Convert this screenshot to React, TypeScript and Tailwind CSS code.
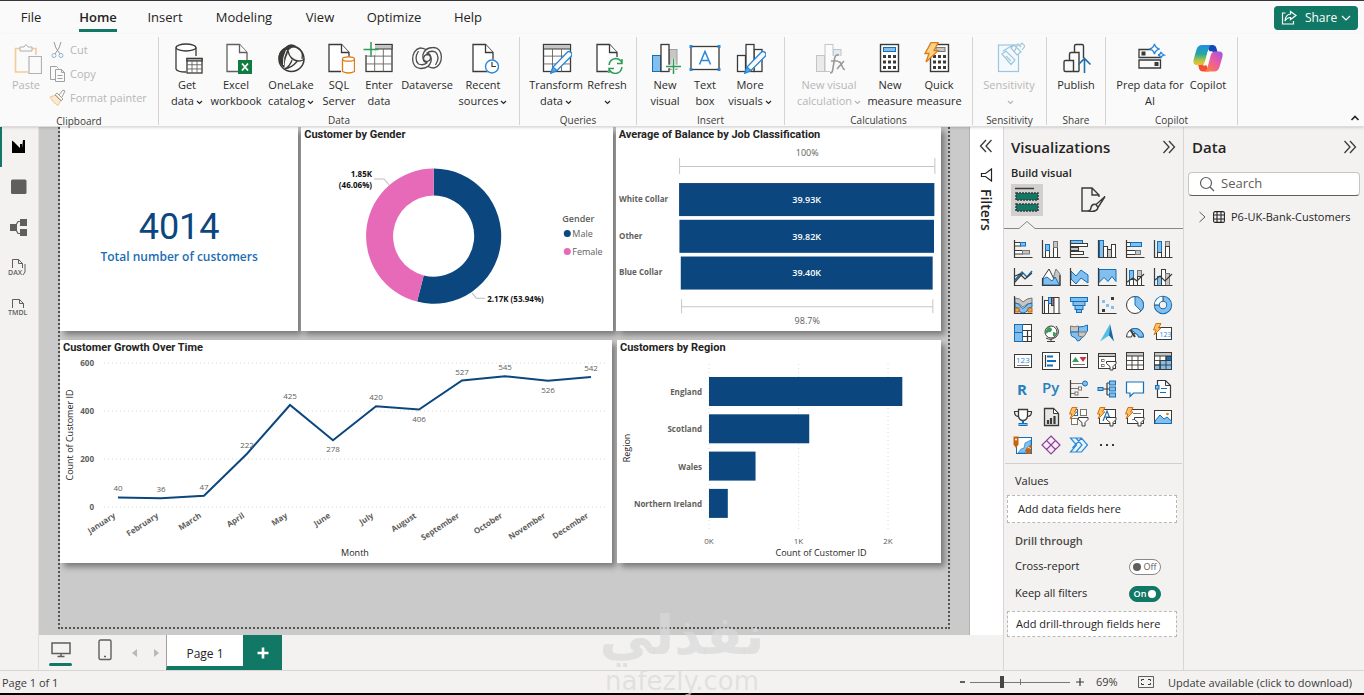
import { useState } from "react";
import type { ReactNode } from "react";

const INK = "#3a3a38";
const BLUE = "#83beec";
const EDGE = "#1170bc";
const GREY = "#c8c6c4";
const MID = "#797673";
const NAVY = "#0b477e";
const PINK = "#e66ab8";

type BoxProps = { x: number; y: number; w: number; h: number; f?: string; s?: string; sw?: number };
function Box({ x, y, w, h, f = "#fff", s = INK, sw = 1 }: BoxProps) {
  return <rect x={x} y={y} width={w} height={h} fill={f} stroke={s} strokeWidth={sw} />;
}
function Line({ d, s = INK, f = "none", w = 1.2 }: { d: string; s?: string; f?: string; w?: number }) {
  return <path d={d} stroke={s} fill={f} strokeWidth={w} />;
}

/* ---------- Ribbon icons (32 x 32) ---------- */

const Pencil = () => (
  <g>
    <path d="M9 31l2-6L25 10.500q2-2 4 0t0 4L15 28.500z" fill="#fafafa" stroke="#2b88d8" strokeWidth="1.4" />
    <path d="M9 31l2-6 4 3.500z" fill="#5ea9e6" stroke="#2b88d8" strokeWidth="1.200" />
  </g>
);
const Bolt = () => <path d="M9 .7h7l-4 8h4L4 20l3-8.500H3z" fill="#fcd28b" stroke="#e07b14" strokeWidth="1.300" />;
const TableGrid = ({ x, y, w, h }: { x: number; y: number; w: number; h: number }) => (
  <g stroke={INK} fill="#fff">
    <rect x={x} y={y} width={w} height={h} strokeWidth="1.300" />
    <rect x={x} y={y} width={w} height={h / 6} fill={GREY} />
    <path
      d={`M${x} ${y + h * 0.43}h${w}M${x} ${y + h * 0.72}h${w}M${x + w / 3} ${y + h / 6}V${y + h}M${x + (w * 2) / 3} ${y + h / 6}V${y + h}`}
      strokeWidth=".9"
      stroke="#69625e"
      fill="none"
    />
  </g>
);
const PageShape = () => (
  <g fill="#fff" stroke={INK} strokeWidth="1.300">
    <path d="M6 2.500h12.500l7.500 8v19H6z" />
    <path d="M18.500 2.500v8H26" />
  </g>
);

const ribbonIcons: Record<string, ReactNode> = {
  paste: (
    <g fill="none" opacity=".55" transform="translate(2 0)">
      <path d="M8 6.500H3.500V30H16M20 6.500h4V13" stroke="#f0a64a" strokeWidth="1.600" />
      <path d="M8 9V5h4q2-4.500 4 0h4v4z" fill="#fafafa" stroke="#777" />
      <path d="M17 14.500h12.500v17H17z" fill="#fafafa" stroke="#777" strokeWidth="1.200" />
    </g>
  ),
  getData: (
    <g fill="none" stroke={INK} strokeWidth="1.300">
      <path d="M5 6v20q0 3.500 10 4V6" fill="#fff" stroke="none" />
      <ellipse cx="15" cy="5.500" rx="10" ry="3.500" fill="#fff" />
      <path d="M5 5.500V27q1 3 10 3M25 5.500V14" />
      <TableGrid x={16} y={16.5} w={15} h={14.500} />
    </g>
  ),
  excel: (
    <g>
      <g opacity=".8" transform="translate(1 0)"><PageShape /></g>
      <rect x="18" y="18" width="14" height="14" fill="#107c41" />
      <path d="M22 21.500l6 7M28 21.500l-6 7" stroke="#fff" strokeWidth="1.800" />
    </g>
  ),
  onelake: (
    <g>
      <circle cx="16.500" cy="17" r="12.500" fill="#fafafa" stroke={INK} strokeWidth="1.500" />
      <path d="M10 5.500Q16-1 23 5.500l-3-.5q-7 1-7.500 7-3 6-3 14Q3 22 3.500 14 4.500 8 10 5.500z" fill={INK} />
      <path d="M13 9q2 9 10 10 5 0 6-2M22 19.500q-6 7-12 7M22 5q7 4 5 12M10 27q5-3 7-9" fill="none" stroke={INK} strokeWidth="1.300" />
      <path d="M11.500 8q-4 8-3 15" fill="none" stroke="#fafafa" strokeWidth="1" />
    </g>
  ),
  sql: (
    <g>
      <PageShape />
      <path d="M18 15.500h14v16.500H18z" fill="#fafafa" />
      <path d="M19.500 17.500v12q6 3 12 0v-12" fill="#fff" stroke="#e07b14" strokeWidth="1.300" />
      <ellipse cx="25.500" cy="17" rx="6" ry="2.200" fill="#fff" stroke="#e07b14" strokeWidth="1.300" />
    </g>
  ),
  enter: (
    <g>
      <TableGrid x={3} y={2.500} w={26} h={27} />
      <path d="M1 0h11v13H1z" fill="#fafafa" />
      <path d="M8 0v15M.5 7.500h15" stroke="#2e9b57" strokeWidth="1.500" />
    </g>
  ),
  dataverse: (
    <g fill="none" stroke="#4d4d4d" strokeWidth="1.300">
      <path d="M9 6C-1 8-1 27 10 26.500q8 0 10-7 1-6-3-7-4 0-4.500 4 0 4 3.500 4" />
      <path d="M23 26C33 24 33 5 22 5.500q-8 0-10 7-1 6 3 7 4.500 0 4.500-4 0-4-3.500-4" />
      <path d="M9 6q3 0 6 1.500M23 26q-3 0-6-1.500M7.500 9q-5 8 0 13 5 2 9-1.500M24.500 23q5-8 0-13-5-2-9 1.500" />
    </g>
  ),
  recent: (
    <g>
      <PageShape />
      <circle cx="25" cy="24.500" r="7.200" fill="#fafafa" />
      <circle cx="25" cy="24.500" r="6.500" fill="#fff" stroke="#2b88d8" strokeWidth="1.400" />
      <path d="M25 20v4.500h4" fill="none" stroke={INK} strokeWidth="1.200" />
    </g>
  ),
  transform: (
    <g transform="translate(1 0)">
      <TableGrid x={2.500} y={2.500} w={27} h={27} />
      <g transform="translate(1 0)"><Pencil /></g>
    </g>
  ),
  refresh: (
    <g>
      <PageShape />
      <path d="M16 15h16v17H17z" fill="#fafafa" />
      <g fill="none" stroke="#2e9b57" strokeWidth="1.500">
        <path d="M18 23q1-6 6.500-6.500 4 0 6.500 4M31 17v4.500h-5M31 25q-1 6-6.500 6.500-4 0-6.500-4M18 31v-4.500h5" />
      </g>
    </g>
  ),
  newVisual: (
    <g>
      <Box x={3.500} y={13.500} w={8} h={16} f={BLUE} s={EDGE} />
      <Box x={20.500} y={7.500} w={7.500} h={20} f={GREY} s="#a19f9d" />
      <Box x={12} y={2.500} w={8} h={27} sw={1.300} />
      <path d="M16 24.500h16M24.500 17v15" stroke="#fafafa" strokeWidth="3.500" />
      <path d="M17 24.500h15M24.500 17v15" stroke="#2e9b57" strokeWidth="1.500" />
    </g>
  ),
  textBox: (
    <g>
      <Box x={2} y={4.500} w={28} h={23} sw={1.300} />
      <path d="M.5 3h3v3h-3zM28.500 3h3v3h-3zM.5 26h3v3h-3zM28.500 26h3v3h-3z" fill="#2b88d8" />
      <path d="M10.500 22.500L16 9.500l5.500 13M12.500 18.500h7" fill="none" stroke="#2b88d8" strokeWidth="1.500" />
    </g>
  ),
  moreVisuals: (
    <g>
      <Box x={3.500} y={13.500} w={8} h={16} sw={1.300} />
      <Box x={20} y={7.500} w={8} h={22} sw={1.300} />
      <Box x={12} y={2.500} w={8} h={27} sw={1.300} />
      <g transform="translate(2 0)"><Pencil /></g>
    </g>
  ),
  calc: (
    <g>
      <g opacity=".55">
        <Box x={3.500} y={13.500} w={8} h={16} f="#ddd" s="#999" />
        <Box x={20} y={7.500} w={8} h={12} f="#c8dff0" s="#999" />
        <Box x={12} y={2.500} w={8} h={27} s="#999" />
      </g>
      <path d="M17 14h14v17H17z" fill="#fafafa" />
      <path d="M26 13q-4-1-4.500 4l-2 12q-.5 2-2.500 2M18 19h7M25 20q2-1 3 2l2 4q1 2 2 1M31 19l-7 8" fill="none" stroke="#9a9a9a" strokeWidth="1.600" />
    </g>
  ),
  measure: (
    <g>
      <Box x={6.500} y={2.500} w={18} h={27} sw={1.400} />
      <Box x={9.500} y={5.500} w={12} h={4} f={BLUE} s={EDGE} />
      <path d="M9 13h3v3H9zM14 13h3v3h-3zM19 13h3v3h-3zM9 18.500h3v3H9zM14 18.500h3v3h-3zM19 18.500h3v3h-3zM9 24h3v3H9zM14 24h3v3h-3zM19 24h3v3h-3z" fill={INK} />
    </g>
  ),
  quick: (
    <g transform="translate(-1 0)">
      <Box x={8.500} y={2.500} w={18} h={27} sw={1.400} />
      <Box x={14} y={5.500} w={9} h={4} f={GREY} s={MID} />
      <path d="M11 13h3v3h-3zM16 13h3v3h-3zM21 13h3v3h-3zM11 18.500h3v3h-3zM16 18.500h3v3h-3zM21 18.500h3v3h-3zM11 24h3v3h-3zM16 24h3v3h-3zM21 24h3v3h-3z" fill={INK} />
      <Bolt />
    </g>
  ),
  sensitivity: (
    <g fill="none" stroke="#9cc7df" strokeWidth="1.200">
      <rect x="5.500" y="3" width="20" height="26.500" fill="#f3f9fc" />
      <path d="M9 12l4-3 9 9-4 4.500zM13 14l5 5M18 6l3-3 7 7-4 3zM21 10l4-8 3 3M26 4l3-3 3 3-3 4M10 9l10-6" fill="#fafafa" />
    </g>
  ),
  publish: (
    <g fill="none" stroke={INK} strokeWidth="1.400">
      <path d="M19 29.500H5.500q-1.500 0-1.500-1.500v-8q0-1.500 1.500-1.500h8V29.500M9.500 18v-6q0-1.500 1.500-1.500h8V29.500M14.500 10V4q0-1.500 1.500-1.500h6q1.500 0 1.500 1.500v12" />
      <path d="M24.500 31V17M18.500 22.500l6-6 6 6" stroke="#1d70ad" strokeWidth="1.600" />
    </g>
  ),
  prep: (
    <g>
      <path d="M17 7.500H5V15.500h21.500v-2M5 18h21.500v8H5z" fill="none" stroke={INK} strokeWidth="1.300" />
      <path d="M7.500 9.500h4v4h-4zM20.500 20h4v4h-4z" fill={INK} />
      <path d="M20.500 2q1 4 5 5-4 1-5 5-1-4-5-5 4-1 5-5zM27 10q.5 2 3 3-2.500.5-3 3-.5-2.500-3-3 2.500-.5 3-3z" fill="#fff" stroke="#2b88d8" strokeWidth="1.300" />
    </g>
  ),
  copilot: (
    <g>
      <defs>
        <linearGradient id="cpA" x1="0" y1="0" x2="0" y2="1">
          <stop offset="0" stopColor="#1f8fe8" />
          <stop offset=".45" stopColor="#26a6a0" />
          <stop offset=".8" stopColor="#b9c83a" />
          <stop offset="1" stopColor="#ffb43a" />
        </linearGradient>
        <linearGradient id="cpB" x1="1" y1="0" x2=".2" y2="1">
          <stop offset="0" stopColor="#9a55e6" />
          <stop offset=".5" stopColor="#ea5aa5" />
          <stop offset="1" stopColor="#ff7b45" />
        </linearGradient>
      </defs>
      <path d="M14 3h6.500q3 0 3.900 3l1.100 4H18z" fill="#1746b8" />
      <path d="M17 29.500h-6q-3.200-.2-4-3L6 22h8z" fill="#f0502f" />
      <path d="M10 3h9.500q-2.200.6-3 4l-3.300 12.500q-.9 3.500-4.400 3.500H5q-4.500 0-3.500-5L4.500 7.500Q5.800 3 10 3z" fill="url(#cpA)" />
      <path d="M22 29.500h-9.500q2.200-.6 3-4l3.300-12.500q.9-3.500 4.400-3.500H27q4.500 0 3.500 5L27.500 25q-1.300 4.500-5.500 4.500z" fill="url(#cpB)" />
      <path d="M15.500 9.700q2.500-.6 5.500-.2-2.200 1-3 4L15.500 23q-2.200.8-5 .2 1.800-1.200 2.700-4.200z" fill="#fafafa" />
    </g>
  ),
};

function Chevron() {
  return (
    <svg width="7" height="5" viewBox="0 0 7 5" className="ml-0.5 inline-block">
      <path d="M1 1l2.500 2.500L6 1" fill="none" stroke="currentColor" strokeWidth="1.200" />
    </svg>
  );
}

type Item = { icon: string; a: string; b?: string; chev?: boolean; w: string; off?: boolean };
function RibbonItem({ icon, a, b, chev, w, off }: Item) {
  return (
    <button disabled={off} className={`${w} flex shrink-0 flex-col items-center whitespace-nowrap pt-2 ${off ? "text-[#b8b6b4]" : "text-[#2b2a29]"}`}>
      <svg width="32" height="32" viewBox="0 0 32 32">{ribbonIcons[icon]}</svg>
      <span className="mt-[3px] block h-8 text-[11px] leading-4">
        <span className="block">{a}</span>
        <span className="block">{b}{chev && <Chevron />}</span>
      </span>
    </button>
  );
}

const groups: { name: string; w: string; pad: string; items: Item[] }[] = [
  {
    name: "Data", w: "w-[361px]", pad: "pl-[6px]",
    items: [
      { icon: "getData", a: "Get", b: "data", chev: true, w: "w-[44px]" },
      { icon: "excel", a: "Excel", b: "workbook", w: "w-[54px]" },
      { icon: "onelake", a: "OneLake", b: "catalog", chev: true, w: "w-[56px]" },
      { icon: "sql", a: "SQL", b: "Server", w: "w-[40px]" },
      { icon: "enter", a: "Enter", b: "data", w: "w-[40px]" },
      { icon: "dataverse", a: "Dataverse", w: "w-[56px]" },
      { icon: "recent", a: "Recent", b: "sources", chev: true, w: "w-[56px]" },
    ],
  },
  {
    name: "Queries", w: "w-[117px]", pad: "pl-[9px]",
    items: [
      { icon: "transform", a: "Transform", b: "data", chev: true, w: "w-[54px]" },
      { icon: "refresh", a: "Refresh", chev: true, w: "w-[48px]" },
    ],
  },
  {
    name: "Insert", w: "w-[148px]", pad: "pl-[8px]",
    items: [
      { icon: "newVisual", a: "New", b: "visual", w: "w-[40px]" },
      { icon: "textBox", a: "Text", b: "box", w: "w-[40px]" },
      { icon: "moreVisuals", a: "More", b: "visuals", chev: true, w: "w-[50px]" },
    ],
  },
  {
    name: "Calculations", w: "w-[188px]", pad: "pl-[6px]",
    items: [
      { icon: "calc", a: "New visual", b: "calculation", chev: true, w: "w-[76px]", off: true },
      { icon: "measure", a: "New", b: "measure", w: "w-[46px]" },
      { icon: "quick", a: "Quick", b: "measure", w: "w-[52px]" },
    ],
  },
  { name: "Sensitivity", w: "w-[74px]", pad: "pl-[8px]", items: [{ icon: "sensitivity", a: "Sensitivity", chev: true, w: "w-[56px]", off: true }] },
  { name: "Share", w: "w-[59px]", pad: "pl-[8px]", items: [{ icon: "publish", a: "Publish", w: "w-[42px]" }] },
  {
    name: "Copilot", w: "w-[132px]", pad: "pl-[8px]",
    items: [
      { icon: "prep", a: "Prep data for", b: "AI", w: "w-[72px]" },
      { icon: "copilot", a: "Copilot", w: "w-[44px]" },
    ],
  },
];

const menu = [
  ["File", "w-[62px]"], ["Home", "w-[72px]"], ["Insert", "w-[62px]"], ["Modeling", "w-[96px]"],
  ["View", "w-[56px]"], ["Optimize", "w-[92px]"], ["Help", "w-[56px]"],
];

function MenuBar() {
  return (
    <header className="flex h-[33px] shrink-0 items-center bg-[#fafafa] pr-1.5">
      <nav className="flex h-full flex-1">
        {menu.map(([name, w]) => (
          <button key={name} className={`${w} flex flex-col items-center pt-1.5 text-[13px] leading-5 text-[#252423] ${name === "Home" ? "font-semibold" : ""}`}>
            <span className={name === "Home" ? "border-b-[3px] border-[#117865] pb-0.5" : ""}>{name}</span>
          </button>
        ))}
      </nav>
      <button className="flex h-6 w-[84px] items-center justify-center gap-2 rounded bg-[#117865] text-xs text-white">
        <svg width="16" height="16" viewBox="0 0 16 16" fill="none" stroke="#fff" strokeWidth="1.200">
          <path d="M4.500 3H1.500v11h11v-3M9.500 1.500l5.500 4-5.500 4V7.500Q6 7.500 4 11q.5-6.500 5.500-7z" />
        </svg>
        <span className="flex items-center gap-1">
          Share
          <svg width="10" height="6" viewBox="0 0 10 6"><path d="M1 1l4 4 4-4" fill="none" stroke="#fff" strokeWidth="1.200" /></svg>
        </span>
      </button>
    </header>
  );
}

function Ribbon() {
  return (
    <section className="relative z-10 flex h-[93px] shrink-0 border-b border-[#dedddc] bg-[#fafafa] pt-[3px] shadow-sm">
      <div className="flex h-[88px] w-[159px] shrink-0 flex-col border-r border-[#d6d4d2] text-[#b8b6b4]">
        <div className="-mt-[3px] flex h-[79px]">
          <button disabled className="flex w-[48px] flex-col items-center pl-1 pt-2 text-[11px] leading-4">
            <svg width="32" height="32" viewBox="0 0 32 32">{ribbonIcons.paste}</svg>
            <span className="mt-[3px]">Paste</span>
          </button>
          <div className="flex flex-col items-start pt-1 text-[11px]">
            <button disabled className="flex h-6 items-center gap-1">
              <svg width="18" height="18" viewBox="0 0 18 18" fill="none" stroke="#999">
                <path d="M6 1q1 6 6 12M13 1q-1 6-6 12" />
                <circle cx="6" cy="14.500" r="2" stroke="#8fb4d0" /><circle cx="13" cy="14.500" r="2" stroke="#8fb4d0" />
              </svg>
              Cut
            </button>
            <button disabled className="flex h-6 items-center gap-1">
              <svg width="18" height="18" viewBox="0 0 18 18" fill="none" stroke="#a0a0a0">
                <path d="M7 14.500H2.500v-13h6l2 2M7.500 4.500h6l3 3v9h-9zM13.500 4.500v3h3M9.500 10.500h5M9.500 13.500h5" />
              </svg>
              Copy
            </button>
            <button disabled className="flex h-6 items-center gap-1 whitespace-nowrap">
              <svg width="18" height="18" viewBox="0 0 18 18" fill="none">
                <path d="M2 8l6-2 5 5-3 5.500Q5 14 2 8z" stroke="#f2c68f" fill="#fbe9d2" />
                <path d="M7 6l2-2 6 6-2 2zM11 6l4-5 2 1-3 6" stroke="#a0a0a0" />
              </svg>
              Format painter
            </button>
          </div>
        </div>
        <span className="mt-1 text-center text-[10px] leading-[14px] text-[#3b3a39]">Clipboard</span>
      </div>
      {groups.map((g) => (
        <div key={g.name} className={`${g.w} flex h-[88px] shrink-0 flex-col border-r border-[#d6d4d2]`}>
          <div className={`${g.pad} -mt-[3px] flex h-[79px]`}>
            {g.items.map((it) => <RibbonItem key={it.icon} {...it} />)}
          </div>
          <span className="mt-1 text-center text-[10px] leading-[14px] text-[#3b3a39]">{g.name}</span>
        </div>
      ))}
      <button aria-label="Collapse ribbon" className="mb-1 ml-auto mr-1 self-end">
        <svg width="10" height="8" viewBox="0 0 10 8"><path d="M1.500 6L5 2.500 8.500 6" fill="none" stroke="#252423" strokeWidth="1.600" /></svg>
      </button>
    </section>
  );
}

/* ---------- Left rail ---------- */

const rail: { label: string; art: ReactNode }[] = [
  { label: "Report view", art: <path d="M4 3.500l2 1.500 6 6V7h2v4l1-8h2v13H4z" fill="#000" /> },
  { label: "Table view", art: <rect x="3" y="2.500" width="15.500" height="14.500" rx="1.500" fill="#605e5c" /> },
  {
    label: "Model view",
    art: (
      <g fill="#605e5c"><path d="M2 7h7v7H2zM12 2h7v7h-7zM12 12h7v7h-7z" /><path d="M8 8l2-3.500h3M8 13l2 3.500h3" fill="none" stroke="#605e5c" strokeWidth="1.200" /></g>
    ),
  },
  {
    label: "DAX query view",
    art: (
      <g fill="none" stroke="#605e5c"><path d="M4.500 11V2.500h6l4 4V11M10.500 2.500v4h4M17 7v8l-2 3" /><text x="0" y="18" fontSize="7" fontWeight="600" fill="#605e5c" stroke="none">DAX</text></g>
    ),
  },
  {
    label: "TMDL view",
    art: (
      <g fill="none" stroke="#605e5c"><path d="M4.500 11V2.500h7l4 4V11M11.500 2.500v4h4" /><text x="0" y="18" fontSize="7" fontWeight="600" fill="#605e5c" stroke="none">TMDL</text></g>
    ),
  },
];

function Rail() {
  return (
    <aside className="flex w-[39px] shrink-0 flex-col border-r border-[#e1dfdd] bg-[#f3f2f1]">
      {rail.map((r, i) => (
        <button key={r.label} aria-label={r.label} className={`flex h-10 items-center justify-center border-l-2 pr-1 ${i === 0 ? "border-[#117865]" : "border-transparent"}`}>
          <svg width="20" height="20" viewBox="0 0 20 20" className="overflow-visible">{r.art}</svg>
        </button>
      ))}
    </aside>
  );
}

/* ---------- Report cards ---------- */

function Card({ title, grow, children }: { title?: string; grow: string; children: ReactNode }) {
  return (
    <article className={`${grow} flex min-w-0 flex-col bg-white shadow-[4px_4px_6px_rgba(0,0,0,0.4)]`}>
      {title && <h2 className="h-4 whitespace-nowrap pl-[3px] font-[Roboto,sans-serif] text-[11px] font-bold leading-4 text-[#252423]">{title}</h2>}
      {children}
    </article>
  );
}

function Donut() {
  const cx = 132.5, cy = 93, R = 67.5, r = 40.5;
  const a = 0.5394 * Math.PI * 2;
  const p = (rad: number, ang: number) => `${cx + rad * Math.sin(ang)} ${cy - rad * Math.cos(ang)}`;
  return (
    <svg viewBox="0 0 311 188" className="w-full" fontSize="8">
      <path d={`M${p(R, 0)}A${R} ${R} 0 1 1 ${p(R, a)}L${p(r, a)}A${r} ${r} 0 1 0 ${p(r, 0)}z`} fill={NAVY} />
      <path d={`M${p(R, a)}A${R} ${R} 0 0 1 ${p(R, 0)}L${p(r, 0)}A${r} ${r} 0 0 0 ${p(r, a)}z`} fill={PINK} />
      <path d="M73 36h10l5 6M171 150l4 5h9" fill="none" stroke="#c0bebc" />
      <g fontWeight="700" fill="#111">
        <text x="71" y="34" textAnchor="end">1.85K</text>
        <text x="71" y="45" textAnchor="end">(46.06%)</text>
        <text x="186" y="159">2.17K (53.94%)</text>
      </g>
      <g fill="#605e5c" fontSize="9">
        <text x="261" y="79" fontWeight="600">Gender</text>
        <text x="271" y="94">Male</text>
        <text x="271" y="112">Female</text>
      </g>
      <circle cx="266" cy="90.500" r="3.500" fill={NAVY} />
      <circle cx="266" cy="108.500" r="3.500" fill={PINK} />
    </svg>
  );
}

function BalanceChart() {
  const rows = [
    { name: "White Collar", v: 39.93 },
    { name: "Other", v: 39.82 },
    { name: "Blue Collar", v: 39.4 },
  ];
  return (
    <svg viewBox="0 0 325 188" className="w-full" fontSize="8">
      <path d="M63.500 15v16M318.500 15v16M63.500 23.500h255M65.500 156v14M316.500 156v14M65.500 163.500h251" stroke="#c8c6c4" fill="none" />
      <g fill="#605e5c" textAnchor="middle" fontSize="9"><text x="191" y="13">100%</text><text x="191" y="181">98.7%</text></g>
      {rows.map((r, i) => {
        const w = (r.v / 39.93) * 255;
        return (
          <g key={r.name}>
            <rect x={190.5 - w / 2} y={40 + i * 36.7} width={w} height="33" fill={NAVY} />
            <text x="190.500" y={60 + i * 36.5} fill="#fff" fontWeight="600" fontSize="9" textAnchor="middle">{r.v.toFixed(2)}K</text>
            <text x="3" y={59 + i * 36.5} fill="#605e5c" fontWeight="700">{r.name}</text>
          </g>
        );
      })}
    </svg>
  );
}

function GrowthChart() {
  const months = ["January", "February", "March", "April", "May", "June", "July", "August", "September", "October", "November", "December"];
  const vals = [40, 36, 47, 222, 425, 278, 420, 406, 527, 545, 526, 542];
  const below = [5, 7, 10];
  const X = (i: number) => 58 + i * 43;
  const Y = (v: number) => 151 - v * 0.24;
  return (
    <svg viewBox="0 0 552 207" className="w-full" fontSize="8">
      {[0, 200, 400, 600].map((t) => (
        <g key={t}>
          <path d={`M44 ${Y(t)}H546`} stroke="#dcdad8" strokeDasharray="1 3" />
          <text x="34" y={Y(t) + 3} textAnchor="end" fill="#605e5c" fontWeight="700">{t}</text>
        </g>
      ))}
      <polyline points={vals.map((v, i) => `${X(i)},${Y(v)}`).join(" ")} fill="none" stroke={NAVY} strokeWidth="2" />
      {vals.map((v, i) => (
        <text key={months[i]} x={X(i)} y={Y(v) + (below.includes(i) ? 12 : -6)} textAnchor="middle" fill="#605e5c">{v}</text>
      ))}
      {months.map((m, i) => (
        <text key={m} textAnchor="end" fill="#605e5c" fontWeight="700" transform={`translate(${X(i) - 2} 161) rotate(-33)`}>{m}</text>
      ))}
      <g fill="#252423" fontSize="9" textAnchor="middle">
        <text transform="translate(13 79) rotate(-90)">Count of Customer ID</text>
        <text x="295" y="200">Month</text>
      </g>
    </svg>
  );
}

function RegionChart() {
  const rows = [
    { name: "England", v: 2.16 },
    { name: "Scotland", v: 1.12 },
    { name: "Wales", v: 0.52 },
    { name: "Northern Ireland", v: 0.21 },
  ];
  return (
    <svg viewBox="0 0 324 207" className="w-full" fontSize="8">
      {[0, 1, 2].map((t) => (
        <g key={t}>
          <path d={`M${92 + t * 89.5} 8V176`} stroke="#dcdad8" strokeDasharray="1 3" />
          <text x={92 + t * 89.5} y="188" textAnchor="middle" fill="#605e5c">{t}K</text>
        </g>
      ))}
      {rows.map((r, i) => (
        <g key={r.name}>
          <rect x="92" y={21 + i * 37.3} width={r.v * 89.5} height="29" fill={NAVY} />
          <text x="85" y={39 + i * 37.3} textAnchor="end" fill="#605e5c" fontWeight="700">{r.name}</text>
        </g>
      ))}
      <g fill="#252423" fontSize="9" textAnchor="middle">
        <text transform="translate(13 92) rotate(-90)">Region</text>
        <text x="204" y="200">Count of Customer ID</text>
      </g>
    </svg>
  );
}

function Canvas() {
  return (
    <div className="flex min-w-0 flex-1 border-r border-[#b3b1af] bg-[#cacaca] pb-1.5 pl-[19px] pr-[19px]">
      <div className="flex min-w-0 flex-1 flex-col border-2 border-t-0 border-dotted border-[#55534f] pr-[7px]">
        <div className="flex gap-[3px]">
          <Card grow="flex-[238]">
            <div className="flex flex-1 flex-col items-center justify-center pt-4">
              <p className="font-[Roboto,sans-serif] text-[36px] font-normal leading-9 text-[#0b477e]">4014</p>
              <p className="mt-1 text-xs font-semibold text-[#1a6db5]">Total number of customers</p>
            </div>
          </Card>
          <Card grow="flex-[311]" title="Customer by Gender"><Donut /></Card>
          <Card grow="flex-[325]" title="Average of Balance by Job Classification"><BalanceChart /></Card>
        </div>
        <div className="mt-[9px] flex gap-[5px]">
          <Card grow="flex-[552]" title="Customer Growth Over Time"><GrowthChart /></Card>
          <Card grow="flex-[324]" title="Customers by Region"><RegionChart /></Card>
        </div>
      </div>
    </div>
  );
}

/* ---------- Side panes ---------- */

function DoubleChevron({ left }: { left?: boolean }) {
  return (
    <svg width="14" height="14" viewBox="0 0 14 14" fill="none" stroke="#3b3a39" strokeWidth="1.300">
      <path d={left ? "M7 1L1.500 7 7 13M12.500 1L7 7l5.500 6" : "M1.500 1L7 7l-5.500 6M7 1l5.500 6L7 13"} />
    </svg>
  );
}

const Axes = () => <Line d="M1.500 1v17.500h18" />;
const SmallFunnel = () => <path d="M9.500 10.500h9.500v2L16 15.500V19h-3v-3.500l-3.500-3z" fill="#fff" stroke={INK} />;
const SmallBolt = () => <path d="M3 .5h5L5.500 5h2.500L1 12l2-5H.5z" fill="#fcc06a" stroke="#d9730d" />;

const visuals: [string, ReactNode][] = [
  ["Stacked bar chart", <><Box x={1.5} y={3.500} w={6} h={3.500} /><Box x={7.5} y={3.500} w={5} h={3.500} f={BLUE} s={EDGE} /><Box x={1.5} y={11.500} w={8} h={3.500} /><Box x={9.500} y={11.500} w={7} h={3.500} f={GREY} s={MID} /><Axes /></>],
  ["Stacked column chart", <><Box x={4.500} y={11.500} w={4} h={7} /><Box x={4.500} y={5.500} w={4} h={6} f={BLUE} s={EDGE} /><Box x={12.500} y={8.500} w={4} h={10} /><Box x={12.500} y={2.500} w={4} h={6} f={GREY} s={MID} /><Axes /></>],
  ["Clustered bar chart", <><Box x={1.500} y={1.500} w={12} h={3} f={BLUE} s={EDGE} /><Box x={1.500} y={4.500} w={17} h={3} /><Box x={1.500} y={8.500} w={8} h={3} f={GREY} /><Box x={1.500} y={12.500} w={13} h={3} /><Axes /></>],
  ["Clustered column chart", <><Box x={2.500} y={1.500} w={4} h={17} f={BLUE} s={EDGE} /><Box x={6.500} y={7.500} w={4} h={11} /><Box x={10.500} y={10.500} w={4} h={8} f={GREY} /><Box x={14.500} y={5.500} w={4} h={13} /><Axes /></>],
  ["100% stacked bar chart", <><Box x={1.500} y={3.500} w={4} h={4} /><Box x={5.500} y={3.500} w={11} h={4} f={BLUE} s={EDGE} /><Box x={1.500} y={11.500} w={9} h={4} /><Box x={10.500} y={11.500} w={5} h={4} f={GREY} s={MID} /><Axes /></>],
  ["100% stacked column chart", <><Box x={4.500} y={2.500} w={4} h={11} f={BLUE} s={EDGE} /><Box x={4.500} y={13.500} w={4} h={5} /><Box x={12.500} y={2.500} w={4} h={5} f={GREY} s={MID} /><Box x={12.500} y={7.500} w={4} h={11} /><Axes /></>],
  ["Line chart", <><Line d="M2 13l7-8 5 5 5-6" s={EDGE} w={1.500} /><Line d="M2 9l5-2 5 5 7-6M2 15l8-9" s={INK} /><Axes /></>],
  ["Area chart", <><path d="M15 2l4 5v11H10z" fill={GREY} stroke={MID} /><path d="M8 2l8 16H2V11z" fill="#fff" stroke={INK} /><path d="M2 12l4-2 5 4 3-4 4.500 8H2z" fill={BLUE} stroke={EDGE} /><Line d="M1.500 11v7.500h17.500V8" /></>],
  ["Stacked area chart", <><path d="M2 4l5 5 5-6 7 5v8l-7-5-5 6-5-5z" fill={BLUE} stroke={EDGE} /><Axes /></>],
  ["100% stacked area chart", <><path d="M2 2.500h17v12l-4-5-4 5-4-4-5 5z" fill={BLUE} stroke={EDGE} /><Axes /></>],
  ["Line and stacked column chart", <><Box x={4.500} y={3.500} w={4} h={9} f={BLUE} s={EDGE} /><Box x={4.500} y={12.500} w={4} h={6} /><Box x={12.500} y={3.500} w={4} h={6} f={GREY} s={MID} /><Box x={12.500} y={9.500} w={4} h={9} /><Line d="M2 15l6-4 4 3 7-7" /><Axes /></>],
  ["Line and clustered column chart", <><Box x={4.500} y={9.500} w={4} h={9} f={BLUE} s={EDGE} /><Box x={8.500} y={2.500} w={4} h={16} /><Box x={12.500} y={6.500} w={4} h={12} f={GREY} s={MID} /><Line d="M2 13l5-4 5 5 7-7" /><Axes /></>],
  ["Ribbon chart", <><path d="M2 3q5 0 8 4 4-4 9-4v5q-5 0-9 4-3-4-8-4z" fill={GREY} stroke={MID} /><path d="M2 8q4 0 6 4 2 3 4 0 3-4 7-4v4q-4 0-5 4-4 4-8 0-1-4-4-4z" fill={BLUE} stroke={EDGE} /><Box x={2} y={13} w={4} h={4} f="#f0a64a" s="#c0640c" /><Box x={15} y={13} w={4} h={4} f="#f0a64a" s="#c0640c" /><Axes /></>],
  ["Waterfall chart", <><Box x={3.500} y={5.500} w={4} h={13} /><Box x={7.500} y={2.500} w={3} h={6} f={BLUE} s={EDGE} /><Box x={10.500} y={2.500} w={2.500} h={8} f="#9c7b9c" /><Box x={13} y={2.500} w={5} h={16} /><Axes /></>],
  ["Funnel", <><Box x={1.500} y={2.500} w={17} h={4} f={BLUE} s={EDGE} /><Box x={4} y={6.500} w={12} h={4} f={BLUE} s={EDGE} /><Box x={6} y={10.500} w={8} h={4} f={BLUE} s={EDGE} /><Box x={7.500} y={14.500} w={5} h={3} f={BLUE} s={EDGE} /></>],
  ["Scatter chart", <><path d="M14 2h3v3h-3zM5 14h3v3H5z" fill={INK} /><path d="M5 5h3v3H5zM9 9h3v3H9zM14 11h3v3h-3z" fill={BLUE} /><Axes /></>],
  ["Pie chart", <><circle cx="10" cy="10" r="8.500" fill="#fff" stroke={INK} /><path d="M10 1.500v8.500l6 6A8.500 8.500 0 0 0 10 1.500z" fill={BLUE} stroke={EDGE} /></>],
  ["Donut chart", <><circle cx="10" cy="10" r="6.200" fill="none" stroke={EDGE} strokeWidth="6" /><circle cx="10" cy="10" r="6.200" fill="none" stroke={BLUE} strokeWidth="4" /><path d="M3.800 10A6.200 6.200 0 0 1 10 3.800" fill="none" stroke="#fff" strokeWidth="4" /><path d="M1.500 10h4.500M10 1.500V6" stroke={INK} /></>],
  ["Treemap", <><Box x={1.500} y={1.500} w={17} h={17} /><Box x={1.500} y={1.500} w={8} h={8} f={BLUE} s={EDGE} /><Box x={1.500} y={9.500} w={8} h={9} f={BLUE} s={EDGE} /><Line d="M9.500 7.500h9M14.500 7.500v11M9.500 13.500h9" /></>],
  ["Map", <><circle cx="10" cy="9" r="6" fill="#fff" stroke={INK} /><path d="M7 4q4 0 4 3-1 3-4 2-1 3-3 0zM12 9q3 0 3 2-1 3-3 2z" fill="#3a9b5c" /><path d="M15 3q5 6 0 11-5 4-10 1M10 16v2.500M6 18.500h8" fill="none" stroke={INK} /></>],
  ["Filled map", <><path d="M1.500 3q4 1.500 8 0v6h-8z" fill={GREY} stroke={MID} /><path d="M9.500 4q5 0 9-2v6l-3 3h-6z" fill={BLUE} stroke={EDGE} /><path d="M1.500 9h8v3h4l2-1q0 3-3 4-1 3-4 3l-2-3-4-2z" fill={BLUE} stroke={EDGE} /><path d="M9.500 9h8q-1 4-4 5l-4-1z" fill={GREY} stroke={MID} /></>],
  ["Azure map", <><path d="M13 1L3 18.500l9-6z" fill="#52bfe8" /><path d="M13 1l4 17.500-5-6z" fill="#1868a8" /></>],
  ["Gauge", <><path d="M1.500 14a8.500 8.500 0 0 1 17 0h-5a3.500 3.500 0 0 0-7 0z" fill="#fff" stroke={INK} /><path d="M6 6.500a8.500 8.500 0 0 1 12.500 7.500h-5q0-2-2-3z" fill={BLUE} stroke={EDGE} /><Line d="M5.500 7l4.500 7" w={2} /></>],
  ["Card (new)", <><Box x={3.500} y={4.500} w={15} h={12} /><text x="6.500" y="14" fontSize="7" fill="#2b88d8">123</text><SmallBolt /></>],
  ["Card", <><Box x={1.500} y={3.500} w={17} h={13} /><text x="3" y="12" fontSize="8" fill="#2b88d8">123</text><Line d="M4 14.500h12" s={MID} w={1} /></>],
  ["Multi-row card", <><Box x={1.500} y={1.500} w={17} h={17} /><Line d="M6 5.500h6M6 10h9M6 14.500h6" s={EDGE} w={2} /><Line d="M4.500 4v12" /></>],
  ["KPI", <><Box x={1.500} y={2.500} w={17} h={14} /><path d="M3 11l3.500-5L10 11z" fill="#3a9b5c" /><path d="M10.500 6h7L14 11z" fill="#d13438" /><Line d="M4 13.500h12" s={MID} w={1} /></>],
  ["Slicer", <><Box x={1.500} y={2.500} w={17} h={15} /><Box x={1.500} y={2.500} w={17} h={3} f={GREY} /><Box x={4.500} y={8.500} w={2.500} h={2} s={MID} /><Box x={4.500} y={13.500} w={2.500} h={2} s={MID} /><SmallFunnel /></>],
  ["Table", <><Box x={1.500} y={1.500} w={17} h={17} /><Box x={1.500} y={1.500} w={17} h={3.500} f={GREY} /><Line d="M1.500 9.500h17M1.500 14h17M7 5v13.500M13 5v13.500" w={0.900} /></>],
  ["Matrix", <><Box x={1.500} y={1.500} w={17} h={17} /><Box x={7} y={9.500} w={11.500} h={9} f={BLUE} /><Box x={1.500} y={14} w={5.500} h={4.500} f={BLUE} /><Box x={13} y={5} w={5.500} h={4.500} f={EDGE} /><Box x={1.500} y={1.500} w={17} h={3.500} f={GREY} /><Line d="M1.500 9.500h17M1.500 14h17M7 5v13.500M13 5v13.500" w={0.900} /></>],
  ["R script visual", <text x="4" y="16" fontSize="15" fontWeight="700" fill="#2680bd">R</text>],
  ["Python visual", <text x="1" y="14" fontSize="15" fontWeight="600" fill="#2680bd">Py</text>],
  ["Key influencers", <><Line d="M2 4.500h12M2 9.500h7M2 14.500h4" s={MID} /><circle cx="16" cy="4.500" r="2.500" fill={BLUE} stroke={EDGE} /><Box x={9.500} y={8} w={3} h={3} s={MID} /><Box x={6} y={13} w={3} h={3} s={MID} /><Axes /></>],
  ["Decomposition tree", <><Line d="M6 10h4M10 4v12M10 4h3M10 10h3M10 16h3" /><Box x={1} y={8.500} w={5} h={3} f={BLUE} s={EDGE} /><Box x={12.500} y={2} w={6} h={4} f={BLUE} s={EDGE} /><Box x={12.500} y={8} w={6} h={4} f={BLUE} s={EDGE} /><Box x={12.500} y={14} w={6} h={4} f={BLUE} s={EDGE} /></>],
  ["Q&A", <path d="M1.500 3h17v11h-10L5 17.500V14H1.500z" fill="#fff" stroke={EDGE} strokeWidth="1.200" />],
  ["Smart narrative", <><path d="M4.500 1.500h8l5 5v12h-13z" fill="#fff" stroke={INK} strokeWidth="1.200" /><path d="M12.500 1.500v5h5" fill="none" stroke={INK} /><Line d="M8 9.500h6M7 13.500h6" s={EDGE} /><Box x={2.500} y={6.500} w={3.5} h={3.5} f={BLUE} s={EDGE} /></>],
  ["Metrics", <><path d="M5.500 2.500h9v7q-1 4-4.500 4t-4.500-4z" fill="#fff" stroke={INK} strokeWidth="1.300" /><Line d="M5.500 4.500h-4q0 5 4 5M14.500 4.500h4q0 5-4 5" /><Line d="M10 13.500v3" s={EDGE} w={2} /><Box x={6} y={16.500} w={8} h={2} f={BLUE} s={EDGE} /></>],
  ["Paginated report", <><path d="M3.500 1.500h9l5 5v12h-14z" fill="#e6e6e6" stroke={INK} strokeWidth="1.300" /><path d="M12.500 1.500v5h5z" fill="#fff" stroke={INK} /><Line d="M7 17v-4M10 17v-6M13.500 17v-8" w={2.200} /></>],
  ["Button slicer", <><Box x={2.500} y={2.500} w={6} h={6} s={EDGE} /><Box x={11.500} y={2.500} w={6} h={6} s={MID} /><Box x={2.500} y={11.500} w={6} h={6} s={MID} /><SmallBolt /><SmallFunnel /></>],
  ["Text slicer", <><Box x={2.500} y={2.500} w={16} h={14} /><Line d="M6 14l4-10 4 10M8 10h4" s={EDGE} /><SmallBolt /><SmallFunnel /></>],
  ["List slicer", <><Box x={2.500} y={2.500} w={16} h={14} /><Line d="M8 6.500h8M7 12.500h4" s={MID} /><SmallBolt /><SmallFunnel /></>],
  ["Image", <><Box x={1.500} y={3.500} w={17} h={13} /><path d="M2 14l5-6 4 4 3-2 4.500 4v2.500H2z" fill={BLUE} stroke={EDGE} /><circle cx="14.500" cy="7" r="1.300" fill="#e07b14" /></>],
  ["ArcGIS", <><Box x={3.500} y={2.500} w={15} h={16} s={EDGE} /><path d="M8 14l3-1 1-5 6-3v5l-4 3-2 5H5z" fill={BLUE} stroke={EDGE} strokeWidth=".6" /><path d="M.5 1.500h5v8L3 13 .5 9.500z" fill="#c8640c" /><circle cx="3" cy="4.500" r="1" fill="#fff" /><circle cx="15.500" cy="16" r="3" fill="#c8640c" /><circle cx="17.500" cy="11.500" r="1.500" fill="#c8640c" /></>],
  ["Power Apps", <g fill="#f9eef9" stroke="#8e3f96" strokeWidth="1.200"><path d="M10 1l4.500 4.500L10 10 5.500 5.500zM5.500 5.500L10 10l-4.500 4.500L1 10zM14.500 5.500L19 10l-4.500 4.500L10 10zM10 10l4.500 4.500L10 19l-4.500-4.500z" /></g>],
  ["Power Automate", <g fill="#eaf4fc" stroke="#2b88d8" strokeWidth="1.200"><path d="M1.500 3h11l6 7-6 7h-11l6-7zM7 3l6 7-6 7M12.500 3l-9 10" /></g>],
  ["More visuals", <path d="M3 9h2v2H3zM9 9h2v2H9zM15 9h2v2h-2z" fill={INK} />],
];

function Toggle({ label, defaultOn }: { label: string; defaultOn: boolean }) {
  const [on, setOn] = useState(defaultOn);
  return (
    <label className="flex h-[27px] items-center justify-between pl-[11px] pr-[22px] text-[11px] text-[#252423]">
      {label}
      <input type="checkbox" className="sr-only" checked={on} onChange={() => setOn(!on)} />
      <span aria-hidden="true" className={`flex h-4 w-8 items-center justify-center gap-0.5 rounded-full border text-[9px] ${on ? "border-[#117865] bg-[#117865] font-semibold text-white" : "border-[#8a8886] bg-white text-[#605e5c]"}`}>
        {on && "On"}
        <span className={`size-2 rounded-full ${on ? "bg-white" : "bg-[#605e5c]"}`} />
        {!on && "Off"}
      </span>
    </label>
  );
}

function FiltersPane() {
  return (
    <aside className="flex w-[33px] shrink-0 flex-col items-center bg-white pr-0.5 pt-3">
      <button aria-label="Expand filters"><DoubleChevron left /></button>
      <svg width="14" height="14" viewBox="0 0 14 14" className="mt-[15px]" fill="none" stroke="#252423" strokeWidth="1.200">
        <path d="M12.500 1v12L6.500 8.500h-4v-3h4z" />
      </svg>
      <span className="mt-[7px] text-sm font-semibold leading-4 text-[#252423] [writing-mode:vertical-rl]">Filters</span>
    </aside>
  );
}

function VisualizationsPane() {
  return (
    <aside className="flex w-[181px] shrink-0 flex-col border-x border-[#d8d6d4] bg-[#f3f2f1] text-[#252423]">
      <div className="flex h-9 items-center justify-between pl-[7px] pr-[7px] pt-1">
        <h2 className="text-[15px] font-semibold">Visualizations</h2>
        <button aria-label="Collapse visualizations"><DoubleChevron /></button>
      </div>
      <h3 className="pl-[7px] text-[11px] font-semibold leading-5">Build visual</h3>
      <div className="flex gap-[34px] pl-[7px] pt-px">
        <button aria-label="Build visual" className="flex size-8 items-center justify-center bg-[#d2d0ce]">
          <svg width="26" height="26" viewBox="0 0 26 26">
            <path d="M1 1.500h19" stroke={INK} strokeWidth="1.500" />
            <rect x="2" y="6" width="22" height="7" fill="#117865" stroke={INK} strokeWidth="1.500" strokeDasharray="2 1" />
            <rect x="2" y="17" width="22" height="7" fill="#117865" stroke={INK} strokeWidth="1.500" strokeDasharray="2 1" />
          </svg>
        </button>
        <button aria-label="Format visual" className="flex size-8 items-center justify-center">
          <svg width="26" height="26" viewBox="0 0 26 26" fill="none" stroke={INK} strokeWidth="1.400">
            <path d="M8 24H2V1h10l7 7v2M12 1v7h7" />
            <path d="M25 9.500l-9 8 2 3 7-11zM16 17.500q-4-1-5 3 0 3-3 3.500 9 1.500 10-3.500z" fill="#f3f2f1" />
          </svg>
        </button>
      </div>
      <svg viewBox="0 0 180 10" preserveAspectRatio="xMinYMin slice" className="mt-[4px] h-[10px] w-full" fill="none" stroke="#8a8886">
        <path d="M0 8.500h15l8-7 8 7h149" />
      </svg>
      <div className="ml-[5px] mt-[5px] grid w-[168px] grid-cols-6">
        {visuals.map(([name, art]) => (
          <button key={name} aria-label={name} className="flex h-7 items-center justify-center">
            <svg width="20" height="20" viewBox="0 0 20 20" className="overflow-visible">{art}</svg>
          </button>
        ))}
      </div>
      <div className="mx-px mt-1 border-t border-[#d2d0ce]" />
      <h3 className="mt-2 pl-[11px] text-[11px] leading-[18px]">Values</h3>
      <div className="ml-[3px] mr-[6px] mt-[5px] flex h-7 items-center border border-dashed border-[#bab8b6] bg-white pl-[10px] text-[11px]">Add data fields here</div>
      <h3 className="mt-[9px] pl-[11px] text-[11px] font-semibold leading-[18px] text-[#4a4846]">Drill through</h3>
      <div className="mt-[3px]">
        <Toggle label="Cross-report" defaultOn={false} />
        <Toggle label="Keep all filters" defaultOn />
      </div>
      <div className="ml-[3px] mr-[6px] mt-1 flex h-[26px] items-center whitespace-nowrap border border-dashed border-[#bab8b6] bg-white pl-2 text-[11px]">Add drill-through fields here</div>
    </aside>
  );
}

function DataPane() {
  return (
    <aside className="flex w-[180px] shrink-0 flex-col bg-[#f3f2f1] pl-1 pr-1 text-[#252423]">
      <div className="flex h-9 items-center justify-between pl-1 pr-[3px] pt-1">
        <h2 className="text-[15px] font-semibold">Data</h2>
        <button aria-label="Collapse data"><DoubleChevron /></button>
      </div>
      <label className="mt-[9px] flex h-6 items-center gap-1.5 rounded border border-[#c8c6c4] border-b-[#605e5c] bg-white pl-2.5">
        <svg width="16" height="16" viewBox="0 0 16 16" fill="none" stroke="#605e5c" strokeWidth="1.200" className="shrink-0">
          <circle cx="7" cy="7" r="5.500" /><path d="M11 11l4 4" />
        </svg>
        <input aria-label="Search" placeholder="Search" className="w-full min-w-0 bg-transparent text-[13px] outline-none placeholder:text-[#605e5c]" />
      </label>
      <button className="mt-3 flex items-center whitespace-nowrap pl-2.5 text-[11px] leading-[18px]">
        <svg width="10" height="12" viewBox="0 0 10 12"><path d="M1.500 1L7 6l-5.500 5" fill="none" stroke="#605e5c" /></svg>
        <svg width="12" height="12" viewBox="0 0 12 12" className="ml-[5px] mr-1.5" fill="none" stroke="#252423" strokeWidth="1.100">
          <rect x=".6" y=".6" width="10.800" height="10.800" rx="1.500" /><path d="M4 .5v11M8 .5v11M.5 4h11M.5 8h11" />
        </svg>
        P6-UK-Bank-Customers
      </button>
    </aside>
  );
}

/* ---------- Bottom bars ---------- */

function PageTabs() {
  return (
    <div className="flex h-[35px] shrink-0 bg-[#f3f2f1]">
      <button aria-label="Desktop layout" className="ml-[10px] flex w-[23px] flex-col items-center pt-[7px]">
        <svg width="20" height="16" viewBox="0 0 20 16" fill="none" stroke="#605e5c" strokeWidth="1.500"><path d="M1 1h18v10.500H1zM10 11.500V14M6.500 14.500h7" /></svg>
        <span className="mt-[5px] h-[3px] w-full rounded bg-[#117865]" />
      </button>
      <button aria-label="Mobile layout" className="ml-[26px] flex items-start pt-1">
        <svg width="14" height="22" viewBox="0 0 14 22" fill="none" stroke="#605e5c" strokeWidth="1.400"><rect x="1" y="1" width="12" height="19.500" rx="1.500" /><path d="M6 17.500h2" /></svg>
      </button>
      <button aria-label="Previous page" className="ml-[20px]"><svg width="5" height="8" viewBox="0 0 5 8"><path d="M5 0v8L0 4z" fill="#bab8b6" /></svg></button>
      <button aria-label="Next page" className="ml-[17px] mr-[7px]"><svg width="5" height="8" viewBox="0 0 5 8"><path d="M0 0v8l5-4z" fill="#bab8b6" /></svg></button>
      <button className="w-[77px] border-b-4 border-l border-b-[#117865] border-l-[#a19f9d] bg-white pt-1.5 text-xs text-[#252423]">Page 1</button>
      <button aria-label="New page" className="flex w-[39px] items-center justify-center bg-[#117865]">
        <svg width="12" height="12" viewBox="0 0 12 12"><path d="M6 .5v11M.5 6h11" stroke="#fff" strokeWidth="2.600" /></svg>
      </button>
    </div>
  );
}

function StatusBar() {
  const [zoom, setZoom] = useState(31);
  return (
    <footer className="flex h-[25px] shrink-0 items-center border-b-2 border-t border-b-black border-t-[#d8d6d4] bg-[#f3f2f1] pl-[2px] pr-1 text-[11px] text-[#3b3a39]">
      <span className="flex-1 pt-[3px]">Page 1 of 1</span>
      <button aria-label="Zoom out" className="mr-[5px] h-0.5 w-[5px] bg-[#605e5c]" />
      <span className="relative flex items-center">
        <input
          type="range"
          aria-label="Zoom"
          value={zoom}
          onChange={(e) => setZoom(Number(e.target.value))}
          className="h-3 w-[100px] appearance-none bg-[linear-gradient(#797775,#797775)] bg-[length:100%_1px] bg-center bg-no-repeat [&::-webkit-slider-thumb]:h-3 [&::-webkit-slider-thumb]:w-1 [&::-webkit-slider-thumb]:appearance-none [&::-webkit-slider-thumb]:bg-[#484644]"
        />
        <span className="pointer-events-none absolute left-1/2 h-1.5 w-px bg-[#797775]" />
      </span>
      <button aria-label="Zoom in" className="ml-1.5">
        <svg width="8" height="8" viewBox="0 0 8 8"><path d="M4 0v8M0 4h8" stroke="#3b3a39" strokeWidth="1.200" /></svg>
      </button>
      <span className="ml-3 w-[42px]">69%</span>
      <button aria-label="Fit to page" className="mr-[14px]">
        <svg width="16" height="12" viewBox="0 0 16 12" fill="none" stroke="#3b3a39"><path d="M.5 3V.5h15V3M.5 9v2.500h15V9M.5 3v6M15.500 3v6" strokeWidth=".8" /><path d="M3.500 5V3.500H6M12.500 5V3.500H10M3.500 7v1.500H6M12.500 7v1.500H10" /></svg>
      </button>
      <a href="#update" className="w-48 whitespace-nowrap pt-[3px]">Update available (click to download)</a>
    </footer>
  );
}

function Watermark() {
  return (
    <div aria-hidden="true" className="pointer-events-none absolute bottom-0 left-1/2 z-20 flex w-[166px] -translate-x-1/2 flex-col items-center whitespace-nowrap text-[#d9d9d9]/70">
      <span dir="rtl" className="font-['DejaVu_Sans',sans-serif] text-[54px] font-bold leading-[62px]">نفذلي</span>
      <span className="font-['DejaVu_Sans',sans-serif] text-[26px] leading-7">nafezly.com</span>
    </div>
  );
}

export default function App() {
  return (
    <div className="relative flex h-screen min-h-[695px] flex-col overflow-hidden border-t border-[#3b363b] font-['Open_Sans','Noto_Sans',sans-serif]">
      <MenuBar />
      <Ribbon />
      <main className="flex min-h-0 flex-1">
        <Rail />
        <div className="flex min-w-0 flex-1 flex-col">
          <div className="flex min-h-0 flex-1">
            <Canvas />
            <FiltersPane />
          </div>
          <PageTabs />
        </div>
        <VisualizationsPane />
        <DataPane />
      </main>
      <StatusBar />
      <Watermark />
    </div>
  );
}
